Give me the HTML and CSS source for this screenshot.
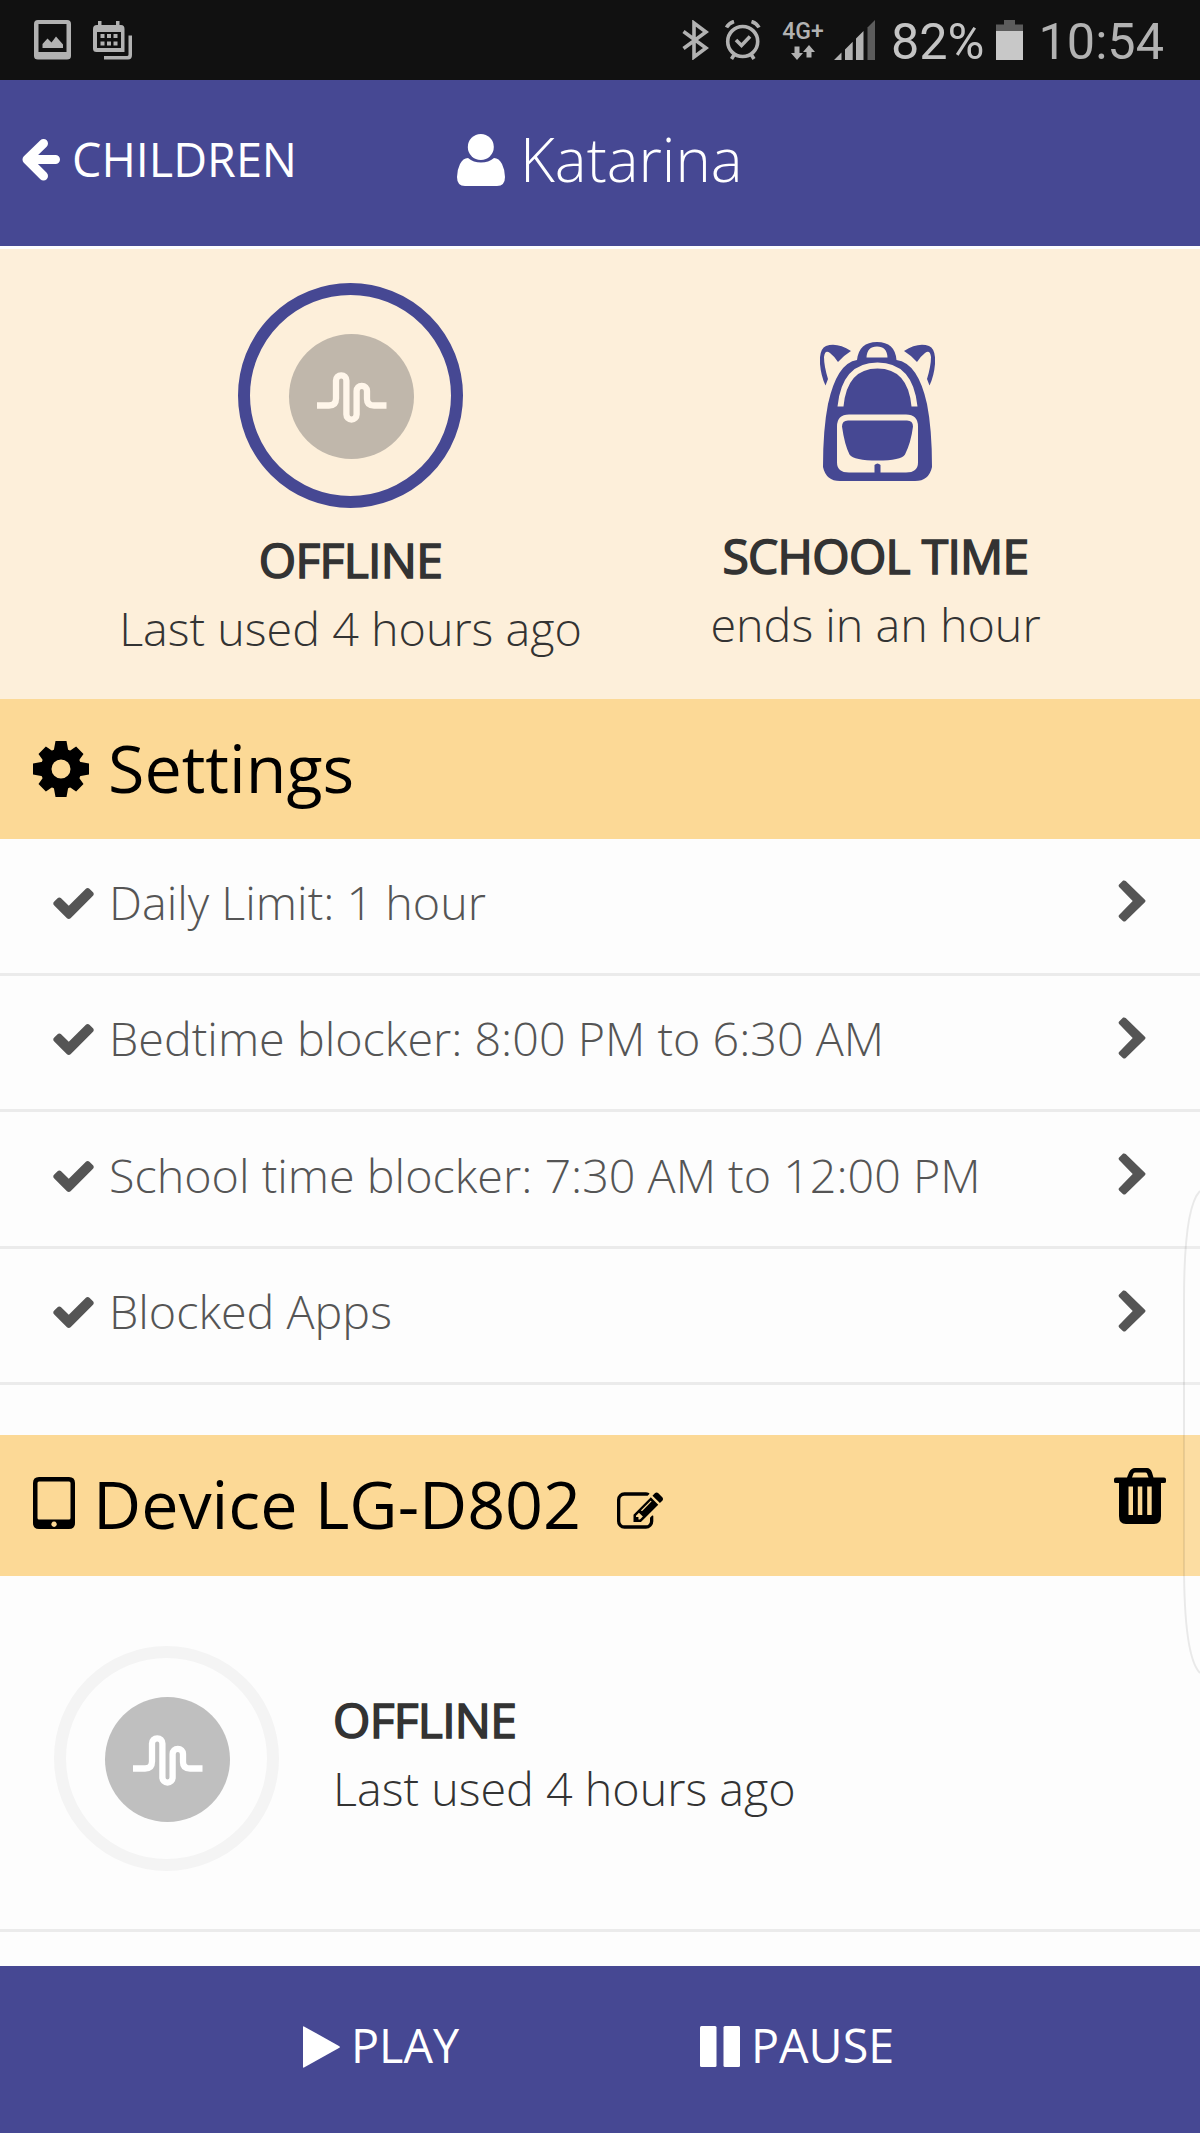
FILE: index.html
```html
<!DOCTYPE html>
<html lang="en">
<head>
    <meta charset="UTF-8">
    <title>Katarina</title>
    <link rel="stylesheet" href="styles.css">
</head>
<body>
    <svg class="defs">
        <symbol id="check" viewBox="121 334 1550 1188">
            <path d="M1671 566q0 40-28 68l-724 724-136 136q-28 28-68 28t-68-28l-136-136-362-362q-28-28-28-68t28-68l136-136q28-28 68-28t68 28l294 295 656-657q28-28 68-28t68 28l136 136q28 28 28 68z"/>
        </symbol>
        <symbol id="chevron" viewBox="0 0 27 42">
            <path d="M4.6.6Q6 0 7.2 1L26.4 19.8Q27.6 21 26.4 22.2L7.2 41Q6 42 4.6 41.2L.6 37.4Q-.4 36.2.6 35L14.2 21 .6 7Q-.4 5.8.6 4.6z"/>
        </symbol>
        <symbol id="wave" viewBox="0 0 70 52">
            <path d="M0 34.5h12q7 0 7-7V9.5a5.2 5.2 0 0 1 10.4 0v34a5.1 5.1 0 0 0 10.2 0V20a5.2 5.2 0 0 1 10.4 0v8q0 6.5 7 6.5h12.5"/>
        </symbol>
    </svg>

    <div class="statusbar">
        <svg class="st-image" width="37" height="40" viewBox="0 0 37 40">
            <path fill-rule="evenodd" d="M4 0h29q4 0 4 4v32q0 3.5-4 3.500H4q-4 0-4-3.500V4q0-4 4-4zM4.500 4v28h28V4zM8.500 28v-4l5-5.500 4 4 4.500-6 7 8v3.500z"/>
        </svg>
        <svg class="st-calendar" width="39" height="39" viewBox="0 0 39 39">
            <path fill-rule="evenodd" d="M5 0h3.500v4H23V0h3.500v4h1.500q3.500 0 3.500 4v23H3.500Q0 31 0 27.500V8q0-4 4-4h1zM4 11v16h24V11z"/>
            <path d="M7.500 13h4v4h-4zM14 13h4v4h-4zM20.500 13h4v4h-4zM7.500 20.500h4v4h-4zM14 20.500h4v4h-4zM20.500 20.500h4v4h-4zM35.500 14.500H39V34q0 4.500-4 4.500H11V35h23q1.500 0 1.500-1.500z"/>
        </svg>

        <svg class="st-bluetooth" width="27" height="40" viewBox="0 0 27 40">
            <path d="M1.500 11.500L24 28 12 37V3l12 9L1.500 28.500"/>
        </svg>
        <svg class="st-alarm" width="36" height="40" viewBox="0 0 36 40">
            <circle cx="17.700" cy="21.500" r="15"/>
            <path d="M1.500 7.500Q4 3 9 1.500M34 7.500Q31.500 3 26.500 1.500M9 35l-2.500 4M26.500 35l2.500 4M11 20l5.500 5.500 8.500-9"/>
        </svg>
        <div class="network">
            <span>4G+</span>
            <svg width="24" height="15" viewBox="0 0 24 15"><path d="M3.500 1.500h5V8H12l-6 7-6-7h3.500zM15.500 12.500h5V7H24l-6-7-6 7h3.500z"/></svg>
        </div>
        <svg class="st-signal" width="41" height="40" viewBox="0 0 41 40">
            <path d="M0 40l7.500-7.500V40zM11 40V29.500l7.700-7.700V40zM22 40V18.500l7.500-7.500v29z"/>
            <path class="dim" d="M33.500 40V7.500L41 0v40z"/>
        </svg>
        <span class="battery-text">82%</span>
        <svg class="st-battery" width="27" height="40" viewBox="0 0 27 40">
            <path class="dim" d="M0 4.500h8V0h11v4.500h8V11H0z"/>
            <path d="M0 11h27v29H0z"/>
        </svg>
        <span class="clock">10:54</span>
    </div>

    <div class="header">
        <div class="back">
            <svg width="39" height="42" viewBox="0 0 39 42"><path d="M22.500 4.500L6 20.500 22.500 37M6 20.500h28.500"/></svg>
            <span>CHILDREN</span>
        </div>
        <div class="child">
            <svg width="48" height="52" viewBox="0 0 48 52">
                <circle cx="23.800" cy="13" r="13"/>
                <path d="M11 24q5.500 4.500 13 4.500T37 24q5 0 8 6 3 6 3 13 0 9-8 9H8q-8 0-8-9 0-7 3-13t8-6z"/>
            </svg>
            <span>Katarina</span>
        </div>
    </div>

    <div class="summary">
        <div class="status">
            <div class="ring active">
                <div class="app"><svg><use href="#wave"/></svg></div>
            </div>
            <div class="title">OFFLINE</div>
            <div class="detail">Last used 4 hours ago</div>
        </div>
        <div class="status">
            <svg class="backpack" width="115" height="139" viewBox="0 0 115 139">
                <path class="solid" d="M37 18Q39 0 57 0t19.500 18Q98 21 107 62q5 25 5 63-3 14-17 14H20Q6 139 3 125q0-38 5-63Q17 21 37 18z"/>
                <path class="solid" d="M31 9Q17 0 6 4-1 7 0 22q1 12 5.500 21.500L8 37Q4 24 4 15q1-8 6-4 4 3 8 9 5-6 13-11zM84 9q14-9 25-5 7 3 6 18-1 12-5.500 21.500L107 37q4-13 4-22-1-8-6-4-4 3-8 9-5-6-13-11z"/>
                <path class="cut" d="M46.500 15.500Q47 4.500 57 4.500t10.500 11zM17.500 64.500Q22 20.500 57.500 20.500t40 44h-6Q88 26.500 57.500 26.500t-34 38zM29 72.500h57q12 0 12 12v36q0 10-12 10H29q-12 0-12-10v-36q0-12 12-12z"/>
                <path class="solid" d="M28 78.500h59q6 0 6 6-2 16-8 28-4 6-27.500 6t-28-6q-5-10-7.500-28 0-6 6-6zM54.500 131v-8q3-3 6 0v8z"/>
            </svg>
            <div class="title">SCHOOL TIME</div>
            <div class="detail">ends in an hour</div>
        </div>
    </div>

    <div class="bar">
        <svg class="cog" width="56" height="56" viewBox="-28 -28 56 56">
            <circle r="15"/>
            <g id="teeth"><path d="M-7.500-17l2-11h11l2 11zM-7.500 17l2 11h11l2-11z"/><path d="M-17-7.500l-11 2v11l11 2zM17-7.500l11 2v11l-11 2z"/></g>
            <use href="#teeth" transform="rotate(45) scale(.95)"/>
        </svg>
        <span>Settings</span>
    </div>

    <div class="settings">
        <div class="row">
            <svg class="check"><use href="#check"/></svg>
            <span>Daily Limit: 1 hour</span>
            <svg class="chevron"><use href="#chevron"/></svg>
        </div>
        <div class="row">
            <svg class="check"><use href="#check"/></svg>
            <span>Bedtime blocker: 8:00 PM to 6:30 AM</span>
            <svg class="chevron"><use href="#chevron"/></svg>
        </div>
        <div class="row">
            <svg class="check"><use href="#check"/></svg>
            <span>School time blocker: 7:30 AM to 12:00 PM</span>
            <svg class="chevron"><use href="#chevron"/></svg>
        </div>
        <div class="row">
            <svg class="check"><use href="#check"/></svg>
            <span>Blocked Apps</span>
            <svg class="chevron"><use href="#chevron"/></svg>
        </div>
    </div>

    <div class="bar device-bar">
        <svg class="tablet" width="42" height="52" viewBox="0 0 42 52">
            <path fill-rule="evenodd" d="M6 0h30q6 0 6 6v40q0 6-6 6H6q-6 0-6-6V6q0-6 6-6zM6 4.500q-1.500 0-1.500 1.500v35q0 1.500 1.500 1.500h30q1.500 0 1.500-1.500V6q0-1.500-1.500-1.500zM21 44.500a2.700 2.700 0 1 0 .1 0z"/>
        </svg>
        <span>Device LG-D802</span>
        <svg class="edit" width="46" height="37" viewBox="0 128 1784 1408">
            <path d="M888 1184l116-116-152-152-116 116v56h96v96h56zm440-720q-16-16-33 1l-350 350q-17 17-1 33t33-1l350-350q17-17 1-33zm80 594v190q0 119-84.500 203.500t-203.500 84.500h-832q-119 0-203.500-84.500t-84.500-203.500v-832q0-119 84.500-203.500t203.500-84.500h832q63 0 117 25 15 7 18 23 3 17-9 29l-49 49q-14 14-32 8-23-6-45-6h-832q-66 0-113 47t-47 113v832q0 66 47 113t113 47h832q66 0 113-47t47-113v-126q0-13 9-22l64-64q15-15 35-7t20 29zm-96-738l288 288-672 672h-288v-288zm444 132l-92 92-288-288 92-92q28-28 68-28t68 28l152 152q28 28 28 68t-28 68z"/>
        </svg>
        <svg class="trash" width="52" height="56" viewBox="0 0 52 56">
            <path fill-rule="evenodd" d="M13 9.500l2-5Q17 0 21 0h12q3.500 0 5 4.500l1.500 5H50q2 0 2 2v2q0 1.500-2 1.500h-3v33q0 8-7 8H12q-7 0-7-8V15H2q-2 0-2-1.500v-2q0-2 2-2zM18 9.500h16.500L33 5.500Q32.500 4.500 31.500 4.500H21.500q-1.500 0-2 1zM14.500 18.500v28.500h4.500v-28.500zM23.800 18.500v28.500h4.500v-28.500zM33.200 18.500v28.500h4.500v-28.500z"/>
        </svg>
    </div>

    <div class="device">
        <div class="ring">
            <div class="app"><svg><use href="#wave"/></svg></div>
        </div>
        <div class="device-text">
            <div class="title">OFFLINE</div>
            <div class="detail">Last used 4 hours ago</div>
        </div>
    </div>

    <div class="footer">
        <div class="action play">
            <svg width="37" height="42" viewBox="0 0 37 42"><path d="M0 1q0-1 1-.6L36.400 20.200q1 .8 0 1.600L1 41.500q-1 .5-1-.5z"/></svg>
            <span>PLAY</span>
        </div>
        <div class="action pause">
            <svg width="40" height="41" viewBox="0 0 40 41"><rect width="16.500" height="41" rx="1.500"/><rect x="23.500" width="16.500" height="41" rx="1.500"/></svg>
            <span>PAUSE</span>
        </div>
    </div>

    <!-- pull-out panel handle on the screen edge -->
    <svg class="edge" width="17" height="484" viewBox="0 0 17 484">
        <path d="M17 1Q1 17 1 110V374Q1 467 17 483"/>
    </svg>
</body>
</html>
```
FILE: styles.css
```css
* {
    box-sizing: border-box;
}

body {
    margin: 0;
    height: 2133px;
    display: flex;
    flex-direction: column;
    position: relative;
    overflow: hidden;
    background: #fdfdfd;
    font-family: "Open Sans", sans-serif;
    font-size: 46.7px;
    white-space: nowrap;
}

svg {
    display: block;
    flex: none;
}

.defs {
    position: absolute;
    width: 0;
    height: 0;
}

/* status bar */
.statusbar {
    height: 80px;
    padding: 0 36px 0 34px;
    display: flex;
    align-items: center;
    background: #111;
    color: #b2b2b2;
    fill: #b2b2b2;
    font-family: Roboto, sans-serif;
    font-size: 50.4px;
}

.statusbar .dim {
    fill: #5c5c5c;
}

.st-calendar {
    margin-left: 22px;
}

.st-bluetooth {
    margin-left: auto;
    fill: none;
    stroke: #b2b2b2;
    stroke-width: 3.6;
}

.st-alarm {
    margin-left: 16px;
    fill: none;
    stroke: #b2b2b2;
    stroke-width: 3.6;
}

.network {
    width: 42px;
    height: 40px;
    margin-left: 21px;
    display: flex;
    flex-direction: column;
    align-items: center;
    justify-content: space-between;
    font-size: 23px;
    font-weight: 500;
    line-height: 23px;
}

.st-signal {
    margin-left: 10px;
}

.battery-text {
    margin-left: 16px;
    padding-top: 3px;
    color: #c4c4c4;
}

.st-battery {
    margin-left: 11px;
    fill: #c8c8c8;
}

.clock {
    margin-left: 16px;
    padding-top: 3px;
}

/* header */
.header {
    height: 169px;
    padding: 0 21px 8px;
    display: flex;
    align-items: center;
    background: #464893;
    border-bottom: 3px solid #fdfdfd;
    color: #fff;
    fill: #fff;
}

.back {
    width: 436px;
    display: flex;
    align-items: center;
}

.back svg {
    margin: 2px 12px 0 0;
    fill: none;
    stroke: #fff;
    stroke-width: 9;
    stroke-linecap: round;
    stroke-linejoin: round;
}

.child {
    display: flex;
    align-items: center;
    font-size: 60px;
    font-weight: 300;
}

.child svg {
    margin: 2px 15px 0 0;
}

/* current status */
.summary {
    height: 450px;
    padding: 34px 62px 0 88px;
    display: flex;
    background: #fdefda;
}

.status {
    flex: 1;
    display: flex;
    flex-direction: column;
    align-items: center;
}

.ring {
    flex: none;
    width: 225px;
    height: 225px;
    display: flex;
    align-items: center;
    justify-content: center;
    border: 12.5px solid #f4f4f4;
    border-radius: 50%;
}

.ring.active {
    margin-bottom: 18px;
    border-color: #464893;
}

.app {
    width: 125px;
    height: 125px;
    margin: 2px 0 0 2px;
    display: flex;
    align-items: center;
    justify-content: center;
    border-radius: 50%;
    background: #bfbfbf;
}

.active .app {
    background: #c0b7ab;
}

.app svg {
    width: 70px;
    height: 52px;
    fill: none;
    stroke: #fff;
    stroke-width: 6.3;
}

.active .app svg {
    stroke: #fff6ea;
}

.backpack {
    margin: 59px 0 41px 4px;
}

.solid {
    fill: #464893;
}

.cut {
    fill: #fdefda;
}

.title {
    line-height: 68px;
    font-size: 48px;
    letter-spacing: -0.7px;
    -webkit-text-stroke: 1.6px #333;
    color: #333;
}

.detail {
    line-height: 68px;
    font-weight: 300;
    color: #333;
}

/* section bars */
.bar {
    height: 140px;
    padding: 0 34px 4px 33px;
    display: flex;
    align-items: center;
    background: #fcd996;
    color: #000;
    font-size: 66.4px;
}

.cog {
    margin: 4px 19px 0 0;
}

.cog circle {
    fill: none;
    stroke: #000;
    stroke-width: 11;
}

.device-bar {
    height: 141px;
    margin-top: 50px;
    padding-bottom: 6px;
}

.tablet {
    margin-right: 18px;
}

.edit {
    margin: 16px 0 0 36px;
}

.trash {
    margin: 0 0 14px auto;
}

/* settings list */
.row {
    height: 136.5px;
    padding: 0 54px 8px 53px;
    display: flex;
    align-items: center;
    border-bottom: 3px solid #ebebeb;
    color: #555;
    fill: #555;
    font-weight: 300;
}

.check {
    width: 41px;
    height: 31px;
    margin: 3px 15px 0 0;
}

.chevron {
    width: 28px;
    height: 42px;
    margin: 0 0 1px auto;
}

/* device */
.device {
    height: 356px;
    padding: 70px 54px 0;
    display: flex;
    border-bottom: 3px solid #ebebeb;
}

.device-text {
    margin: 40px 0 0 54px;
}

/* footer */
.footer {
    height: 167px;
    margin-top: auto;
    padding: 0 303px 10px;
    display: flex;
    align-items: center;
    background: #464893;
    color: #fff;
    fill: #fff;
}

.action {
    display: flex;
    align-items: center;
}

.action svg {
    margin: 4px 11px 0 0;
}

.play {
    width: 397px;
}

.edge {
    position: absolute;
    top: 1190px;
    right: 0;
    fill: rgba(255, 255, 255, 0.12);
    stroke: rgba(0, 0, 0, 0.08);
    stroke-width: 2;
}
```
